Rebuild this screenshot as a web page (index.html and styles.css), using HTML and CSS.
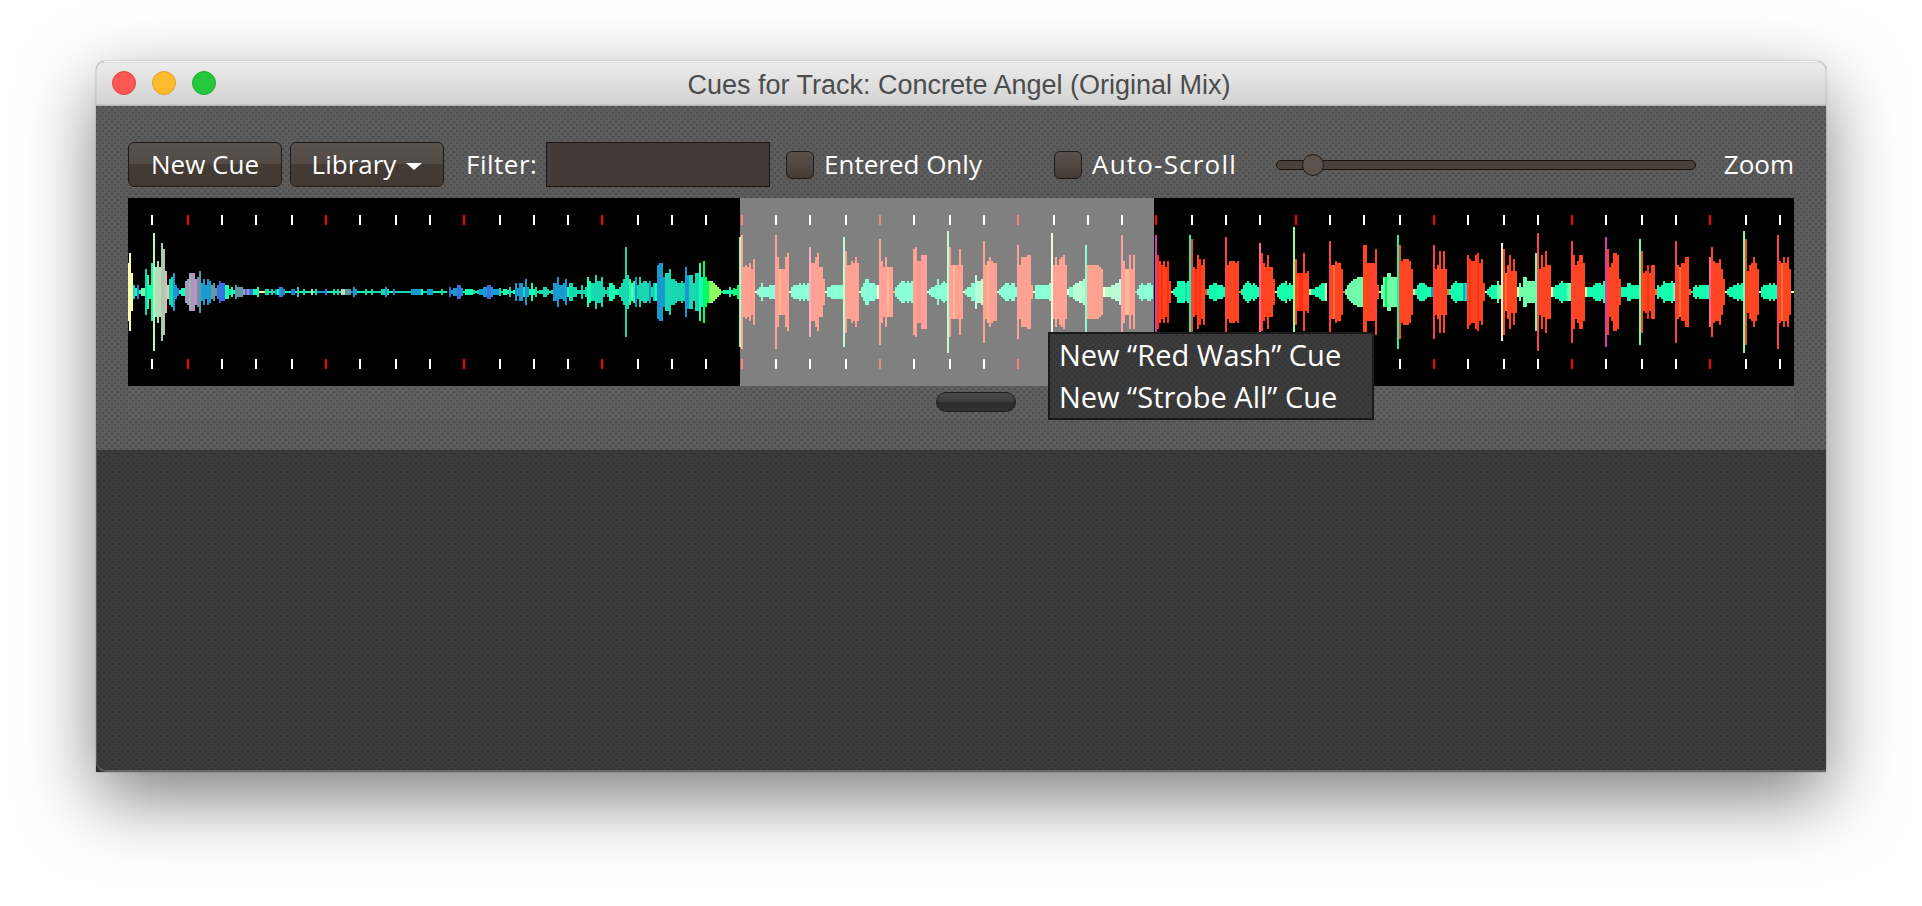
FILE: index.html
```html
<!DOCTYPE html>
<html>
<head>
<meta charset="utf-8">
<title>Cues for Track: Concrete Angel (Original Mix)</title>
<link rel="stylesheet" href="styles.css">
</head>

<body>

<div class="window">
	<div class="titlebar">
		<div class="lights">
			<span class="light red"></span>
			<span class="light yellow"></span>
			<span class="light green"></span>
		</div>
		<div class="title">Cues for Track: Concrete Angel (Original Mix)</div>
	</div>

	<div class="panel">
		<div class="toolbar">
			<div class="btn new-cue">New Cue</div>
			<div class="btn library">Library <span class="caret"></span></div>
			<label class="filter-label">Filter:</label>
			<div class="field"></div>
			<div class="check check-entered"><span class="box"></span><span class="check-text">Entered Only</span></div>
			<div class="check check-scroll"><span class="box"></span><span class="check-text">Auto-Scroll</span></div>
			<div class="slider"><span class="thumb"></span></div>
			<div class="zoom-label">Zoom</div>
		</div>

		<div class="wave">
			<canvas id="wave" width="1666" height="188"></canvas>
			<div class="selection"></div>
			<div class="tooltip">
				<div>New “Red Wash” Cue</div>
				<div>New “Strobe All” Cue</div>
			</div>
		</div>

		<div class="scrollbar"><span class="scroll-thumb"></span></div>
	</div>

	<div class="lower"></div>
</div>

<script src="wave.js"></script>
</body>
</html>
```

FILE: styles.css
```css
html, body {
	margin: 0;
	height: 100%;
	overflow: hidden;
	background: #fff;
}

body {
	font-family: "Open Sans", "DejaVu Sans", sans-serif;
	font-size: 26px;
	color: #fff;
	padding: 61px 96px 0;
	box-sizing: border-box;
}

.window {
	width: 1730px;
	height: 711px;
	display: flex;
	flex-direction: column;
	background: #2a2a2a;
	border-radius: 9px 9px 0 0;
	box-shadow: 0 26px 72px rgba(0, 0, 0, .5), 0 0 2px rgba(0, 0, 0, .3);
}

/* title bar */
.titlebar {
	height: 45px;
	flex: none;
	box-sizing: border-box;
	display: flex;
	align-items: center;
	justify-content: center;
	padding: 3px 4px 0 0;
	position: relative;
	background: linear-gradient(#ececec, #d2d2d2);
	border-top: 1px solid #f4f4f4;
	border-bottom: 1px solid #b4b4b4;
	border-radius: 9px 9px 0 0;
	box-shadow: inset 0 0 0 1px rgba(0, 0, 0, .06);
}

.lights {
	position: absolute;
	left: 16px;
	top: 9px;
	display: flex;
	gap: 16px;
}

.light {
	width: 24px;
	height: 24px;
	box-sizing: border-box;
	border-radius: 50%;
	border: 1px solid;
}

.red { background: #fd5754; border-color: #e0443e; }
.yellow { background: #febb2e; border-color: #dea123; }
.green { background: #25c73c; border-color: #1dad2b; }

.title {
	font-family: "Liberation Sans", sans-serif;
	font-size: 27px;
	color: #4c4c4c;
}

/* the dotted texture of both panels */
.panel, .tooltip, .lower {
	background-size: 6px 6px;
	background-position: 0 0, 3px 3px;
}

.panel {
	height: 344px;
	flex: none;
	padding: 36px 32px 0;
	box-sizing: border-box;
	background-color: #5c5c5c;
	background-image:
		radial-gradient(circle at 1px 1px, #4e4e4e 1.1px, transparent 1.6px),
		radial-gradient(circle at 1px 1px, #4e4e4e 1.1px, transparent 1.6px);
}

.lower, .tooltip {
	background-color: #3b3b3b;
	background-image:
		radial-gradient(circle at 1px 1px, #343434 1.1px, transparent 1.6px),
		radial-gradient(circle at 1px 1px, #343434 1.1px, transparent 1.6px);
}

.lower {
	flex: 1;
	border-left: 1px solid #5a5a5a;
	border-bottom: 2px solid #666;
	border-radius: 0 0 0 10px;
}

/* toolbar */
.toolbar {
	height: 45px;
	display: flex;
	align-items: center;
	white-space: nowrap;
}

.btn {
	width: 154px;
	height: 45px;
	box-sizing: border-box;
	padding-bottom: 2px;
	display: flex;
	align-items: center;
	justify-content: center;
	gap: 10px;
	border: 1px solid #1e1a17;
	border-radius: 6px;
	background: linear-gradient(#5a524d, #524a45 50%, #443b34 50%, #423932);
	box-shadow: 0 1px 0 rgba(255, 255, 255, .08);
}

.library {
	margin-left: 8px;
}

.caret {
	width: 0;
	height: 0;
	margin-top: 5px;
	border-left: 8px solid transparent;
	border-right: 8px solid transparent;
	border-top: 7px solid #fff;
}

.filter-label {
	margin-left: 22px;
	width: 72px;
	padding-bottom: 2px;
	letter-spacing: .5px;
}

.field {
	width: 224px;
	height: 45px;
	margin-left: 8px;
	box-sizing: border-box;
	background: #443b37;
	border: 1px solid #151211;
}

.check {
	display: flex;
	align-items: center;
	gap: 10px;
}

.check-text {
	padding-bottom: 2px;
}

.check-entered {
	margin-left: 16px;
	width: 268px;
}

.check-scroll {
	width: 222px;
	letter-spacing: 1.2px;
}

.box {
	width: 28px;
	height: 28px;
	box-sizing: border-box;
	border: 1px solid #1e1a17;
	border-radius: 6px;
	background: linear-gradient(#5a524d, #443b34);
}

.slider {
	width: 420px;
	height: 10px;
	box-sizing: border-box;
	position: relative;
	border: 1px solid #171310;
	border-radius: 5px;
	background: #4a413b;
}

.thumb {
	position: absolute;
	left: 25px;
	top: -7px;
	width: 22px;
	height: 22px;
	box-sizing: border-box;
	border: 1px solid #1e1a17;
	border-radius: 50%;
	background: #5a524c;
}

.zoom-label {
	margin-left: auto;
	padding-bottom: 2px;
}

/* waveform */
.wave {
	width: 1666px;
	height: 188px;
	margin-top: 11px;
	position: relative;
	background: #000;
}

.wave canvas {
	display: block;
}

.selection {
	position: absolute;
	left: 612px;
	top: 0;
	width: 414px;
	height: 188px;
	background: rgba(255, 255, 255, .5);
}

.tooltip {
	position: absolute;
	left: 920px;
	top: 134px;
	width: 326px;
	height: 88px;
	box-sizing: border-box;
	padding: 0 0 0 9px;
	border: 2px solid #1a1a1a;
	font-size: 29px;
	line-height: 42px;
	white-space: nowrap;
}

/* scrollbar under the waveform */
.scrollbar {
	height: 34px;
	padding-top: 6px;
	box-sizing: border-box;
	display: flex;
	justify-content: flex-start;
	background: rgba(255, 255, 255, .02);
}

.scroll-thumb {
	width: 80px;
	height: 20px;
	margin-left: 808px;
	box-sizing: border-box;
	border: 1px solid #1c1c1c;
	border-radius: 10px;
	background: linear-gradient(#4a4a4a, #3c3c3c 50%, #2e2e2e 50%, #303030);
}
```

FILE: wave.js
```js
// waveform is drawn in 2px columns, same as the real thing
var colors = {
	y: "#ffffb0", g: "#14ffb0", t: "#18d8b0", b: "#1a98d0", B: "#3c70e0",
	s: "#b8dcb8", S: "#b0c8b0", k: "#e8b0c0", m: "#a8ffb8", n: "#70ffa8",
	p: "#a898c0", d: "#6098a8", e: "#a0b0b0", q: "#c090c0", G: "#00ff60",
	L: "#90ff60", R: "#ff4422", r: "#ff4048", o: "#ff7030", O: "#ff3010",
	P: "#d040b0", H: "#ff60a0", M: "#90ff90", Y: "#e8e8a0", D: "#f0f0c0",
	c: "#20f0a0"
};

// [x of first column, "height+color*repeat ..."]
var chunks = [
	[127, "29y 39y 19y 7t 4g 7B 2g 4n 4n 23t 17g 7g 29g 59m 25s 31s 25s 49S 43S 21k 7s 13t 15t 19b 7b 4B 2g 4g*2 11p 13p 19e 19p 19q 13q 15d 21d 9b 13b 7b 13b 11b 7d 9d 4d 7B 11B 9B*2 7g*2 3t 5g 2g 7d 5d*3 3p 3B 3p 3B*2 3g*2 5g"],
	[259, "1y*3 3t*2 1g 3t 1g 3b 3g 5b 5B 3b 1g*3 3B*2 1g 5t 1g*2 3t 1g*3 3s 1g 3t 1b*4 3B 1g*3 3t 1g 3t 1g 3s*2 3d*3 1b 5b 3b 1g*4 3t 1g*2 3t 1t*4 3t*2 5b 3t 1g*2 3B 1t*8 3b*5 3g 1t*2 3b*3 1g*4 3t 1g*2"],
	[449, "5B 2b 4b 4b 7B*2 4b 1g 3g*4 2t 1g 2t 3b*2 5b*2 7B*2 5b 3b*3 4t 1g 3g*2 2g 5t 1g 2g 9b 4b 9b*2 5t 13b 5b 3g 9g 3g 5t 1g 2t*2 5t 5t 3t 1g 2t"],
	[553, "9b 9b 15b 7b*2 9b 13b 5g 9t*2 5t*2 2t 2t 7t 2t 5t 15g 11g 9t 9t 17t 11t*2 15t 5t 2t 5t 9g*2 7g 3g 3g 5t 9t 13t 45t 17t 13g 9n 11g 15b 7t 15t 9t 11t*2 9t 11b 5t 9t 9g"],
	[657, "27b 29b*2 15b 19t*2 23t 13t 13t 11t 9t*2 11t 9t 25b 17b 17t*2 9t 19t*2 29g 15g 31G 15G 11G 11L*2 9L 7L 5L 3L 1g 2g*2 2g 5g 2g 4G 3g 7G"],
	[739, "55n 57R 25R 27R 25R 29R 23O 33R 1y 3g 5g 9g 5g*3"],
	[769, "7g*3 57r 35R 23o 23R 23R 35R 39R 1y 5g 7g*3 9g 7g 9g 7g 9g"],
	[809, "45H 29R*2 35R 39R 25R*2 13R 1y 5g*2 7g*5 7g"],
	[843, "55n 41R 27R*2 31R 29R 35R 29R 1y 5g 9g 13g*2 9g*2 9g 7g 7y"],
	[879, "53r 31R 25R 35R 25o 25R*2 1o 5g 7g 9g 11g*2 9g 11g 9g 11g"],
	[913, "43R 45R 31O*2 37R 37r*2 1y 3g 5g*2 7g 13g 7g 9g 11g 9g"],
	[947, "61n 45R 27R 27o 27R*2 43R 27R 1y 3g 5g*2 9g*2 17n 11n*2 13n"],
	[983, "51R 27R 31o 35R 31R 29R*2 1y 3g 5g 7g 9g*2 7g 9g*2 5g"],
	[1017, "47r 27R 35R*3 37R*2 7R 1y 7g*7 9g"],
	[1051, "59D 27R 35R 27R 33R 35R 37R 27R 3y 5g*2 7n 9n*2 11n*2 13n"],
	[1085, "47c 27R*6 25R 23R 5y 5n*3 7n*2 9n*2 13n*2"],
	[1121, "57r 31R 23o*2 37R 23R 37R 1o 3g 7g 9g 7g*2 9g*2 7g"],
	[1155, "57P 37O 31R 27O 31R 25R 31O 11R 1y 3g 5g 11g*4 9t 11g"],
	[1189, "57c 53r 25R 23O 37R 33O 27R 33R 3R 3g 7g*2 9g*2 7g*3 5g"],
	[1225, "55r 27R 31R*3 29R 31R 1o 3g 7g 9g 11g 9g 7g 9g 7g 5g"],
	[1259, "49H 39R 29R 25R 37R 25R*2 13R 1y 5g 7g 9g*2 11g 7g 9g 7g"],
	[1293, "65M 33R 19R 19O*2 39R 19R 21R 3Y 3g*2 5g*2 7g 9g*2 9Y"],
	[1329, "51r 27R 27o 31R 29R*2 23R 1o 3n 7n 9n 11n 13n*2 15n*3"],
	[1363, "47R*2 29R*3 29r 43R 7R 1y 7n 15n 15G 19n*2 15n*3"],
	[1397, "57c 47R 31R 33R*2 33R 31R 23R 3Y 3g 7g 9g*2 9g 7g 5g*2 5b"],
	[1433, "47r 23R 27R 41R 23R 41R 23R 3o 3g 7g 9g 11g 9g*3 9b 9t"],
	[1467, "37R 33O 31R 31R 37R 39O 29R 33R 9R 1y 3g 5g 7g*3 11n 7n 7n"],
	[1501, "49D 43R 19o 27R 37R 21R 33R 21R 5y 9n 5n 15n*2 11n*4"],
	[1535, "39n 59r 23R 37R 25R 41R 27R*2 5y 5g 7g*2 9g 11g 9g*2 9n*2"],
	[1571, "51r 37R 27R 31R 37R*2 29R 5y 5g*3 7g 9g*3 7g 11g"],
	[1605, "55P 43R 25R 29R 39R*2 37R 13R 5g*3 9g*2 7g*4"],
	[1639, "53n 41R 19R 21R 27O 19R 27R*2 3o 7g 5g 7g 11g 9g*3 11g 9n"],
	[1675, "51r 27R 25o 29R*2 35R*2 3o 1g 5g 7g 5g 7g*5"],
	[1709, "35H 45R 31R 29R*2 33R 23R 13R 1y 3g 5g*2 7g*2 9g 7g 9g"],
	[1743, "61n 53R 21R 27R 29R 35R 29R 23R 1y 5g 7g*3 9g 7g 9g 7g 7y"],
	[1777, "57r 31R 29o 35R 29R 35R 23R 1y 1y"]
];

var ctx = document.getElementById("wave").getContext("2d");
var mid = 94;

chunks.forEach(function (chunk) {
	var x = chunk[0] - 128;
	chunk[1].split(" ").forEach(function (tok) {
		var m = tok.match(/(\d+)(\w)(?:\*(\d+))?/);
		var n = m[3] ? parseInt(m[3]) : 1;
		ctx.fillStyle = colors[m[2]];
		for (var i = 0; i < n; i++) {
			ctx.fillRect(x, mid - m[1], 2, m[1] * 2);
			x += 2;
		}
	});
});

// beat ticks, every 4th one is red
for (var i = 0; i < 48; i++) {
	var left = 2 * Math.floor((152.9 + i * 34.62 - 129) / 2) + 1;
	ctx.fillStyle = i % 4 == 1 ? "#f00" : "#fff";
	ctx.fillRect(left, 17, 2, 10);
	ctx.fillRect(left, 161, 2, 10);
}
```
